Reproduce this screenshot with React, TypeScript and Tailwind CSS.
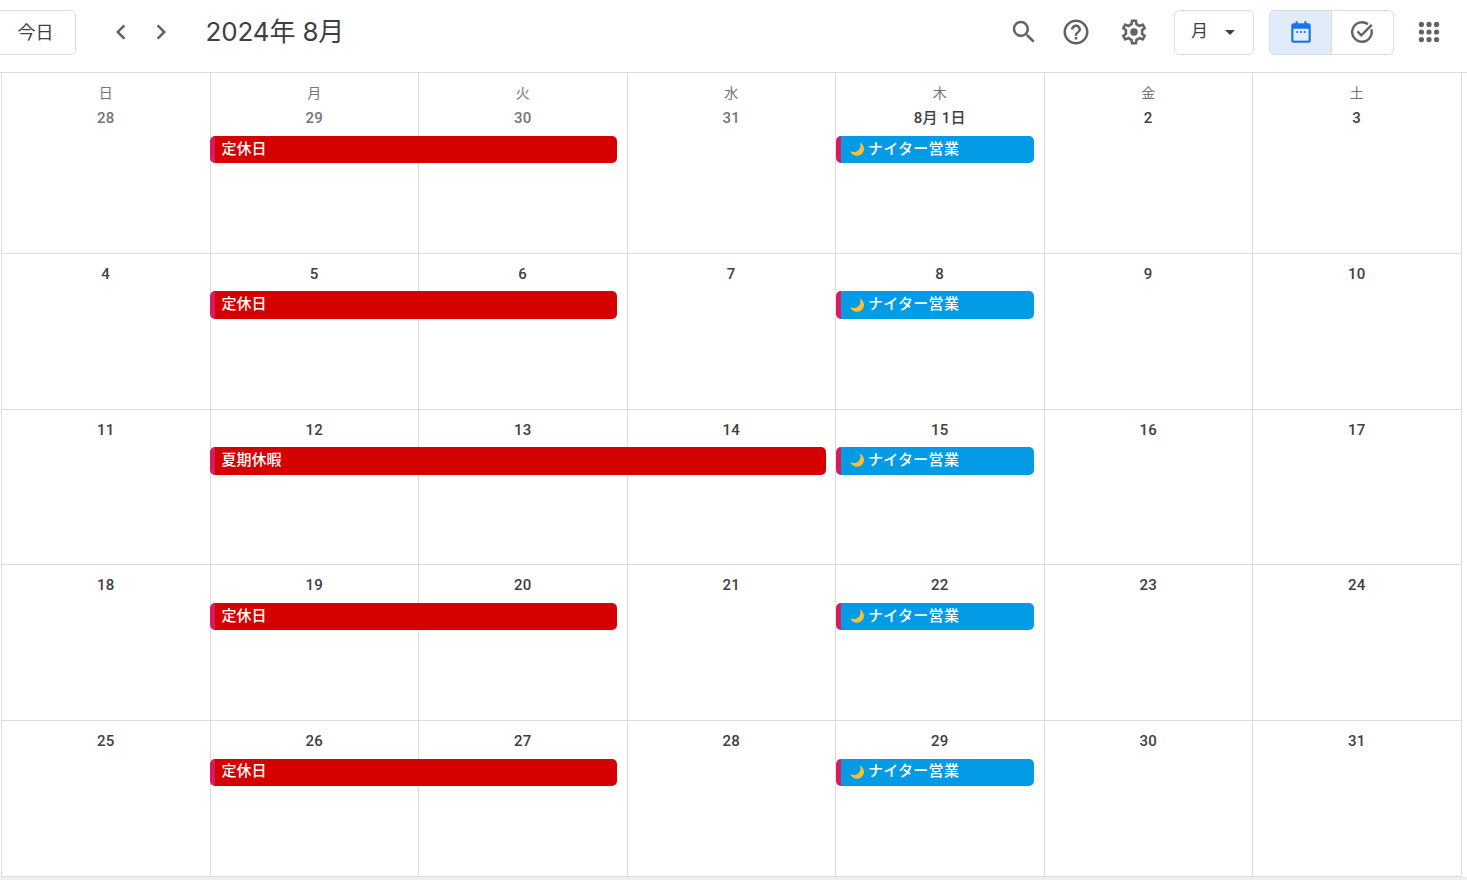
import { MdChevronLeft, MdChevronRight, MdSearch, MdHelpOutline } from "react-icons/md";

const cjk = "font-['Roboto','Noto_Sans_CJK_JP',sans-serif]";

type Day = { label: string; muted?: boolean };

const labels = ["日", "月", "火", "水", "木", "金", "土"];

const weeks: Day[][] = [
  [{ label: "28", muted: true }, { label: "29", muted: true }, { label: "30", muted: true }, { label: "31", muted: true }, { label: "8月 1日" }, { label: "2" }, { label: "3" }],
  [{ label: "4" }, { label: "5" }, { label: "6" }, { label: "7" }, { label: "8" }, { label: "9" }, { label: "10" }],
  [{ label: "11" }, { label: "12" }, { label: "13" }, { label: "14" }, { label: "15" }, { label: "16" }, { label: "17" }],
  [{ label: "18" }, { label: "19" }, { label: "20" }, { label: "21" }, { label: "22" }, { label: "23" }, { label: "24" }],
  [{ label: "25" }, { label: "26" }, { label: "27" }, { label: "28" }, { label: "29" }, { label: "30" }, { label: "31" }],
];

const colStart = ["col-start-1", "col-start-2", "col-start-3", "col-start-4", "col-start-5", "col-start-6", "col-start-7"];

function SettingsIcon() {
  return (
    <svg width="30" height="30" viewBox="0 0 24 24" fill="#5f6368">
      <path d="M19.43 12.98c.04-.32.07-.64.07-.98 0-.34-.03-.66-.07-.98l2.11-1.65c.19-.15.24-.42.12-.64l-2-3.46c-.09-.16-.26-.25-.44-.25-.06 0-.12.01-.17.03l-2.49 1c-.52-.4-1.08-.73-1.69-.98l-.38-2.65C14.46 2.18 14.25 2 14 2h-4c-.25 0-.46.18-.49.42l-.38 2.65c-.61.25-1.17.59-1.69.98l-2.49-1c-.06-.02-.12-.03-.18-.03-.17 0-.34.09-.43.25l-2 3.46c-.13.22-.07.49.12.64l2.11 1.65c-.04.32-.07.65-.07.98 0 .33.03.66.07.98l-2.11 1.65c-.19.15-.24.42-.12.64l2 3.46c.09.16.26.25.44.25.06 0 .12-.01.17-.03l2.49-1c.52.4 1.08.73 1.69.98l.38 2.65c.03.24.24.42.49.42h4c.25 0 .46-.18.49-.42l.38-2.65c.61-.25 1.17-.59 1.69-.98l2.49 1c.06.02.12.03.18.03.17 0 .34-.09.43-.25l2-3.46c.12-.22.07-.49-.12-.64l-2.11-1.65zm-1.98-1.71c.04.31.05.52.05.73 0 .21-.02.43-.05.73l-.14 1.13.89.7 1.08.84-.7 1.21-1.27-.51-1.04-.42-.9.68c-.43.32-.84.56-1.25.73l-1.06.43-.16 1.13-.2 1.35h-1.4l-.19-1.35-.16-1.13-1.06-.43c-.43-.18-.83-.41-1.23-.71l-.91-.7-1.06.43-1.27.51-.7-1.21 1.08-.84.89-.7-.14-1.13c-.03-.31-.05-.54-.05-.74s.02-.43.05-.73l.14-1.13-.89-.7-1.08-.84.7-1.21 1.27.51 1.04.42.9-.68c.43-.32.84-.56 1.25-.73l1.06-.43.16-1.13.2-1.35h1.39l.19 1.35.16 1.13 1.06.43c.43.18.83.41 1.23.71l.91.7 1.06-.43 1.27-.51.7 1.21-1.07.85-.89.7.14 1.13z" />
      <circle cx="12" cy="12" r="3" />
    </svg>
  );
}

function CalendarIcon() {
  return (
    <svg width="26" height="26" viewBox="0 0 24 24">
      <path d="M7 2h2v2h6V2h2v2h2a2 2 0 0 1 2 2v14a2 2 0 0 1-2 2H5a2 2 0 0 1-2-2V6a2 2 0 0 1 2-2h2z" fill="#1a73e8" />
      <rect x="5" y="9" width="14" height="11" fill="#e1ecfb" />
      <circle cx="8.5" cy="12" r="1" fill="#1a73e8" />
      <circle cx="12" cy="12" r="1" fill="#1a73e8" />
      <circle cx="15.5" cy="12" r="1" fill="#1a73e8" />
    </svg>
  );
}

function TaskIcon() {
  return (
    <svg width="26" height="26" viewBox="0 0 24 24" fill="none" stroke="#5f6368" strokeWidth="2.2" className="-ml-[2px]">
      <path d="M20.6 9.5A9 9 0 1 1 17.5 4.9" />
      <path d="M7.8 11.5l3.6 3.6L21 5.5" />
    </svg>
  );
}

function AppsIcon() {
  const dots = [5, 12, 19];
  return (
    <svg width="26" height="26" viewBox="0 0 24 24" fill="#5f6368">
      {dots.map((y) => dots.map((x) => <circle key={`${x}-${y}`} cx={x} cy={y} r="2.4" />))}
    </svg>
  );
}

function Moon() {
  return (
    <svg width="16" height="16" viewBox="0 0 16 16" className="shrink-0">
      <path d="M10.5 1.2c2 3.4.8 7.6-3 9.3-2 .9-4.2.7-6.2-.2 1.3 3 4 4.7 6.9 4.5 3.7-.3 6.8-3.4 6.8-7.1 0-2.8-1.8-5.3-4.5-6.5z" fill="#fbc02d" />
    </svg>
  );
}

function Bar({ title, color, start, span, moon }: { title: string; color: string; start: string; span: string; moon?: boolean }) {
  return (
    <div className={`${start} ${span} row-start-2 z-10 mr-[9.5px] flex items-center overflow-hidden rounded-[5px] border-l-[5px] border-[#d81b60] pb-[1px] text-[15px] leading-none text-white ${color} ${moon ? "ml-[1px] gap-[3px] pl-[8px]" : "pl-[7px]"}`}>
      {moon && <Moon />}
      <span className={`font-medium ${moon ? "tracking-[0.3px]" : ""}`}>{title}</span>
    </div>
  );
}

function Week({ days, index }: { days: Day[]; index: number }) {
  const first = index === 0;
  const holiday = index === 2;
  return (
    <div className={`grid grid-cols-7 border-b border-[#dadce0] ${first ? "h-[180.9px] grid-rows-[63px_27px_1fr]" : "h-[155.75px] grid-rows-[37.5px_27.5px_1fr]"}`}>
      {days.map((d, i) => (
        <div key={i} className={`${colStart[i]} row-start-1 row-end-4 border-l border-[#dadce0] text-center`}>
          {first && <div className="mt-[12px] h-[17px] text-[14px] leading-[17px] text-[#70757a]">{labels[i]}</div>}
          <div className={`text-[15px] font-medium leading-[20px] tracking-[0.25px] ${first ? "mt-[6px]" : "mt-[10px]"} ${d.muted ? "text-[#70757a]" : "text-[#3c4043]"}`}>{d.label}</div>
        </div>
      ))}
      {holiday ? (
        <Bar title="夏期休暇" color="bg-[#d50000]" start="col-start-2" span="col-span-3" />
      ) : (
        <Bar title="定休日" color="bg-[#d50000]" start="col-start-2" span="col-span-2" />
      )}
      <Bar title="ナイター営業" color="bg-[#039be5]" start="col-start-5" span="col-span-1" moon />
    </div>
  );
}

export default function App() {
  return (
    <div className={`h-[880px] w-[1467px] overflow-hidden bg-white ${cjk}`}>
      <header className="flex h-[73px] items-center border-b border-[#dadce0] pb-[8px]">
        <button className="-ml-[5px] h-[45px] w-[81px] rounded-[5px] border border-[#dadce0] text-[18px] text-[#3c4043]">今日</button>
        <div className="ml-[30px] flex items-center gap-[10px] text-[#5f6368]">
          <MdChevronLeft size={30} />
          <MdChevronRight size={30} />
        </div>
        <h1 className="ml-[29.5px] font-['Inter','Noto_Sans_CJK_JP',sans-serif] text-[26px] font-normal leading-none tracking-[-0.15px] text-[#3c4043]">2024年 8月</h1>
        <div className="ml-auto flex items-center">
          <MdSearch size={30} className="ml-[1px] text-[#5f6368]" />
          <MdHelpOutline size={30} className="ml-[22px] text-[#5f6368]" />
          <div className="ml-[28px]"><SettingsIcon /></div>
          <button className="ml-[25px] flex h-[45px] w-[80px] items-center rounded-[5px] border border-[#dadce0] pl-[16px] text-[17px] text-[#3c4043]">
            月
            <svg width="10" height="5" viewBox="0 0 10 5" className="ml-[17px]"><path d="M0 0h10L5 5z" fill="#3c4043" /></svg>
          </button>
          <div className="ml-[15px] flex h-[45px] w-[125px] overflow-hidden rounded-[5px] border border-[#dadce0]">
            <div className="flex w-[61px] items-center justify-center bg-[#e1ecfb]"><CalendarIcon /></div>
            <div className="flex flex-1 items-center justify-center border-l border-[#dadce0]"><TaskIcon /></div>
          </div>
          <div className="ml-[22px] mr-[25px]"><AppsIcon /></div>
        </div>
      </header>
      <main className="ml-[1px] w-[1460.5px] border-r border-[#dadce0]">
        {weeks.map((w, i) => <Week key={i} days={w} index={i} />)}
      </main>
      <div className="h-[4px] bg-[#eeeeee]" />
    </div>
  );
}
